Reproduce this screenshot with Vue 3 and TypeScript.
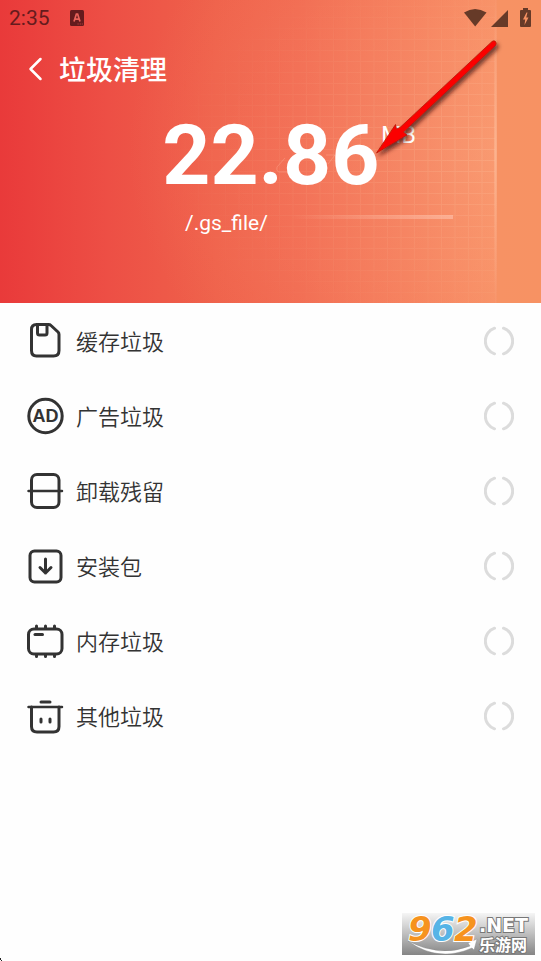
<script setup lang="ts">
type IconName = 'cache' | 'ad' | 'uninstall' | 'package' | 'memory' | 'other'

interface JunkItem {
  icon: IconName
  label: string
}

const size = '22.86'
const unit = 'MB'
const scanPath = '/.gs_file/'

const items: JunkItem[] = [
  { icon: 'cache', label: '缓存垃圾' },
  { icon: 'ad', label: '广告垃圾' },
  { icon: 'uninstall', label: '卸载残留' },
  { icon: 'package', label: '安装包' },
  { icon: 'memory', label: '内存垃圾' },
  { icon: 'other', label: '其他垃圾' },
]
</script>

<template>
  <div class="page">
    <header class="hero">
      <svg class="hero-art" viewBox="0 0 541 303" preserveAspectRatio="xMaxYMid slice" aria-hidden="true">
        <defs>
          <linearGradient id="base" x1="0" x2="1" y1="0" y2="0">
            <stop offset="0" stop-color="#e93a3a" />
            <stop offset="0.2" stop-color="#ed4f45" />
            <stop offset="0.4" stop-color="#ef624b" />
            <stop offset="0.55" stop-color="#f16a50" />
            <stop offset="0.75" stop-color="#f47e5a" />
            <stop offset="0.92" stop-color="#f79264" />
            <stop offset="1" stop-color="#f79263" />
          </linearGradient>
          <radialGradient id="glow" gradientUnits="userSpaceOnUse" cx="497" cy="150" r="370" gradientTransform="translate(0 30) scale(1 0.8)">
            <stop offset="0" stop-color="#ffb296" stop-opacity="0.26" />
            <stop offset="0.5" stop-color="#ff9b80" stop-opacity="0.18" />
            <stop offset="1" stop-color="#ff9b80" stop-opacity="0" />
          </radialGradient>
          <radialGradient id="fade" gradientUnits="userSpaceOnUse" cx="497" cy="155" r="340" gradientTransform="translate(0 62) scale(1 0.6)">
            <stop offset="0" stop-color="#fff" />
            <stop offset="0.5" stop-color="#fff" stop-opacity="0.45" />
            <stop offset="1" stop-color="#fff" stop-opacity="0" />
          </radialGradient>
          <linearGradient id="edge" x1="0" x2="0" y1="0" y2="1">
            <stop offset="0" stop-color="#ffc8a8" stop-opacity="0" />
            <stop offset="0.5" stop-color="#ffc8a8" stop-opacity="0.4" />
            <stop offset="1" stop-color="#ffc8a8" stop-opacity="0" />
          </linearGradient>
          <linearGradient id="beam" x1="0" x2="1" y1="0" y2="0">
            <stop offset="0" stop-color="#ffc3ae" stop-opacity="0" />
            <stop offset="1" stop-color="#ffc3ae" stop-opacity="0.6" />
          </linearGradient>
          <pattern id="grid" width="13.5" height="11" x="9" y="6" patternUnits="userSpaceOnUse">
            <path d="M0 .5H13.5M.5 0V11" stroke="#ffc3a3" stroke-width="1" stroke-opacity="0.26" fill="none" />
          </pattern>
          <mask id="gridMask">
            <rect width="541" height="303" fill="url(#fade)" />
          </mask>
        </defs>
        <rect width="541" height="303" fill="url(#base)" />
        <rect width="497" height="303" fill="url(#glow)" />
        <rect x="150" width="346" height="303" fill="url(#grid)" mask="url(#gridMask)" />
        <path d="M285 158l-8 9q-1 5 3 5h16M326 155l9 0-7 9" fill="none" stroke="#ffb59b" stroke-opacity="0.35" />
        <rect x="494" width="3" height="303" fill="url(#edge)" />
        <rect x="290" y="215" width="163" height="4" fill="url(#beam)" />
      </svg>

      <div class="status">
        <span class="clock">2:35</span>
        <svg class="status-app" viewBox="0 0 14 16" aria-hidden="true">
          <rect width="14" height="16" rx="1.5" fill="#651b1d" />
          <path d="M4 11.500 6.400 4h1.200l2.400 7.500M5 9.200h4" fill="none" stroke="#e8625a" stroke-width="1.700" />
          <path d="M7.500 14h1.200M9.700 14h1.200M11.800 14h1" stroke="#b8423f" stroke-width="1" />
        </svg>
        <svg class="status-system" viewBox="0 0 68 20" aria-hidden="true">
          <g fill="#663a28">
            <path d="M1 4.500Q12-2.500 23.500 4.500L12.200 18.500z" />
            <path d="M45 2v17H28z" />
            <path d="M60 0h5v2h2q1 0 1 1v15q0 1-1 1h-9q-1 0-1-1V3q0-1 1-1h2z" />
          </g>
          <path d="M63.500 4.500 60 11.500h2.200l-.7 5.500 4-7.500h-2.300l1.300-5z" fill="#f79263" />
        </svg>
      </div>

      <div class="title-bar">
        <button class="back" type="button" aria-label="返回">
          <svg viewBox="0 0 14 24" aria-hidden="true">
            <path d="M12 2 2 12l10 10" fill="none" stroke="#fff" stroke-width="2.500" stroke-linecap="round" stroke-linejoin="round" />
          </svg>
        </button>
        <h1>垃圾清理</h1>
      </div>

      <div class="total">
        <strong>{{ size }}</strong>
        <span>{{ unit }}</span>
      </div>
      <p class="scan-path">{{ scanPath }}</p>

      <svg class="pointer" viewBox="0 0 136 128" aria-hidden="true">
        <defs>
          <filter id="shadow" x="-20%" y="-20%" width="150%" height="150%">
            <feDropShadow dx="2" dy="3" stdDeviation="2" flood-color="#3a1208" flood-opacity="0.75" />
          </filter>
        </defs>
        <g filter="url(#shadow)">
          <path d="M120 3.500Q122 2 123.500 3.500T123.500 7.500L31.500 94l3.500 3L4.500 115 23.500 86.500l1 4.500 3.500-1.500z" fill="#fb0500" stroke="#b01408" stroke-width="0.700" />
        </g>
      </svg>
    </header>

    <main>
      <ul class="list">
        <li v-for="item in items" :key="item.label" class="row">
          <svg class="icon" viewBox="0 0 36 36" aria-hidden="true">
            <g v-if="item.icon === 'cache'">
              <path d="M9.500 1.500H21.500Q23 1.500 24 2.500L31 9Q32 10 32 11.500V27.500Q32 33 26.500 33H9.500Q4.500 33 4.500 27.500V6.500Q4.500 1.500 9.500 1.500z" />
              <path d="M10.500 1.500V10Q10.500 12 12.500 12H18Q20 12 20 10V1.500" />
            </g>
            <g v-else-if="item.icon === 'ad'">
              <circle cx="18.500" cy="18" r="16.700" />
              <text x="18.500" y="24" text-anchor="middle">AD</text>
            </g>
            <g v-else-if="item.icon === 'uninstall'">
              <rect x="4.500" y="1.500" width="27.500" height="33" rx="5.500" />
              <path d="M1.500 18H35" stroke-width="2.500" />
            </g>
            <g v-else-if="item.icon === 'package'">
              <rect x="3" y="3" width="31" height="31" rx="4.500" />
              <path d="M18.500 11V25M13 19.500l5.500 5.500 5.500-5.500" />
            </g>
            <g v-else-if="item.icon === 'memory'">
              <rect x="1.500" y="6" width="33.500" height="25" rx="5.500" />
              <path d="M9.500 3V5M18.500 3V5M27.500 3V5M9.500 32V33.500M18.500 32V33.500M27.500 32V33.500" />
              <path d="M8 11.500H15.500" />
            </g>
            <g v-else>
              <path d="M14 4H23" />
              <path d="M1.500 9H35" stroke-width="2.500" />
              <path d="M4.500 9V28.500Q4.500 34 10 34H26.500Q32 34 32 28.500V9" />
              <path d="M14 21V24M23 21V24" />
            </g>
          </svg>
          <span class="label">{{ item.label }}</span>
          <svg class="spinner" viewBox="0 0 30 30" role="img" aria-label="扫描中">
            <path d="M10.500 2.200A13.500 13.500 0 0 0 10.500 27.800M19.500 2.200A13.500 13.500 0 0 1 19.500 27.800" />
          </svg>
        </li>
      </ul>
    </main>

    <footer class="footer">
      <svg class="corner" viewBox="0 0 2 3" aria-hidden="true">
        <path d="M0 0h1v2h1v1H1V2H0z" fill="#222" />
      </svg>
      <div class="brand">
        <svg class="swoosh" viewBox="0 0 133 42" aria-hidden="true">
          <path d="M6 28Q38 45 68 33l-2-3 9-4-3 11-2-2Q36 50 6 28z" fill="#fff" stroke="#888" stroke-width="0.400" />
        </svg>
        <span class="digits"><i class="orange">9</i><i class="blue">6</i><i class="orange">2</i></span>
        <span class="names">
          <span class="net">.NET</span>
          <span class="site">乐游网</span>
        </span>
      </div>
    </footer>
  </div>
</template>

<style>
body {
  margin: 0;
  background: #fefefe;
}
</style>

<style scoped>
.page {
  display: flex;
  flex-direction: column;
  min-height: 100vh;
  color: #333;
  font-family: Roboto, "Noto Sans CJK SC", sans-serif;
}

.hero {
  position: relative;
  box-sizing: border-box;
  min-height: 303px;
  color: #fff;
  background: #ee5a49;
}

.hero-art {
  position: absolute;
  inset: 0;
  width: 100%;
  height: 100%;
}

.status,
.title-bar,
.total,
.scan-path {
  position: relative;
}

.status {
  display: flex;
  align-items: center;
  height: 36px;
  padding: 0 10px 0 9px;
}

.clock {
  color: #651b1d;
  font-size: 21px;
  line-height: 36px;
}

.status-app {
  width: 14px;
  height: 16px;
  margin-left: 20px;
}

.status-system {
  width: 68px;
  height: 20px;
  margin-left: auto;
}

.title-bar {
  display: flex;
  align-items: center;
  gap: 16px;
  height: 66px;
  padding-left: 28px;
}

.back {
  display: flex;
  padding: 0;
  border: 0;
  background: none;
  cursor: pointer;
}

.back svg {
  width: 15px;
  height: 24px;
}

h1 {
  margin: 0;
  font-family: "Noto Sans CJK SC", sans-serif;
  font-size: 27px;
  font-weight: 500;
  line-height: 40px;
}

.total {
  display: flex;
  justify-content: center;
  align-items: flex-start;
  gap: 2px;
  padding: 2px 0 0 37px;
}

.total strong {
  font-size: 84px;
  font-weight: 700;
  line-height: 104px;
}

.total span {
  padding-top: 18px;
  font-size: 23px;
  line-height: 28px;
}

.scan-path {
  width: 82px;
  margin: 0 auto;
  padding-right: 89px;
  font-size: 21px;
  line-height: 30px;
  white-space: nowrap;
}

.pointer {
  position: absolute;
  top: 38px;
  left: calc(50% + 101px);
  width: 136px;
  height: 128px;
}

.list {
  margin: 0;
  padding: 0;
  list-style: none;
}

.row {
  display: flex;
  align-items: center;
  gap: 13px;
  height: 75px;
  padding: 0 27px;
}

.icon {
  width: 36px;
  height: 36px;
  overflow: visible;
  fill: none;
  stroke: #333;
  stroke-width: 3;
  stroke-linecap: round;
  stroke-linejoin: round;
}

.icon text {
  fill: #333;
  stroke: none;
  font-family: "Liberation Sans", sans-serif;
  font-size: 18px;
  font-weight: 700;
}

.label {
  padding-bottom: 2px;
  font-family: "Noto Sans CJK SC", sans-serif;
  font-size: 22px;
  font-weight: 350;
  line-height: 32px;
}

.spinner {
  width: 30px;
  height: 30px;
  margin-left: auto;
  fill: none;
  stroke: #dcdcdc;
  stroke-width: 3;
  stroke-linecap: round;
}

.footer {
  display: flex;
  justify-content: space-between;
  align-items: flex-end;
  margin-top: auto;
  padding-right: 6px;
}

.corner {
  width: 2px;
  height: 3px;
}

.brand {
  position: relative;
  display: flex;
  box-sizing: border-box;
  width: 133px;
  height: 42px;
  margin-bottom: 6px;
  padding-left: 6px;
  background: linear-gradient(#f5f5f5, #c4c4c4 45%, #858585);
}

.swoosh {
  position: absolute;
  inset: 0;
  width: 100%;
  height: 100%;
}

.digits {
  position: relative;
  display: flex;
  width: 71px;
  font-family: "DejaVu Sans", sans-serif;
  font-size: 34px;
  font-weight: 700;
  line-height: 32px;
}

.digits i {
  width: 23px;
  paint-order: stroke;
  -webkit-text-stroke: 2px #fff;
}

.orange {
  color: #f6931e;
}

.blue {
  color: #56b4e6;
}

.names {
  position: relative;
  display: flex;
  flex-direction: column;
  padding-top: 2px;
  color: #fff;
}

.net,
.site {
  font-weight: 700;
  paint-order: stroke;
  -webkit-text-stroke: 2px #777;
}

.net {
  font-family: "DejaVu Sans", sans-serif;
  font-size: 19px;
  line-height: 20px;
}

.site {
  font-family: "Noto Sans CJK SC", sans-serif;
  font-size: 16px;
  line-height: 18px;
}
</style>
